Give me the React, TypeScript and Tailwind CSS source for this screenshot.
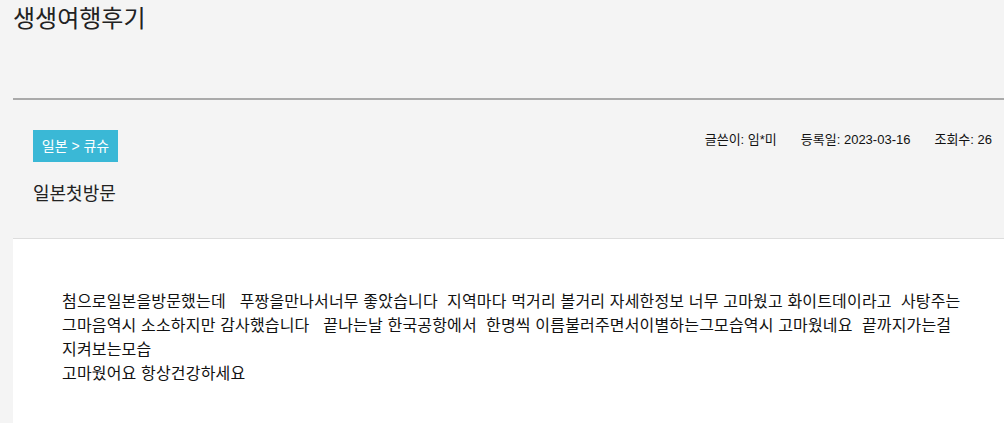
import React from "react";

const lines = [
  "첨으로일본을방문했는데   푸짱을만나서너무 좋았습니다  지역마다 먹거리 볼거리 자세한정보 너무 고마웠고 화이트데이라고  사탕주는",
  "그마음역시 소소하지만 감사했습니다   끝나는날 한국공항에서  한명씩 이름불러주면서이별하는그모습역시 고마웠네요  끝까지가는걸",
  "지켜보는모습",
  "고마웠어요 항상건강하세요",
];

export default function App() {
  return (
    <div
      className="min-h-screen bg-[#f4f4f4] text-[#222]"
      style={{ fontFamily: '"Liberation Sans", "Noto Sans CJK KR", sans-serif' }}
    >
      <div className="h-[98px] pl-[13px] pt-[3px]">
        <h1 className="text-[24px] leading-[32px] font-normal">생생여행후기</h1>
      </div>
      <div className="ml-[13px] h-[2px] bg-[#aaaaaa]" />
      <div className="ml-[13px] border-b border-[#dddddd] pl-[20px] pr-[12px] pt-[30px] pb-[32px]">
        <div className="flex items-start justify-between">
          <div className="flex h-[32px] w-[85px] items-center justify-center bg-[#3ab8d6] text-[14px] text-white">
            일본 &gt; 큐슈
          </div>
          <div className="mt-[1px] flex gap-[24px] text-[13px] leading-[18px] text-[#111]">
            <span>글쓴이: 임*미</span>
            <span>등록일: 2023-03-16</span>
            <span>조회수: 26</span>
          </div>
        </div>
        <div className="mt-[20px] text-[18px] leading-[24px]">일본첫방문</div>
      </div>
      <div className="ml-[13px] bg-white pl-[49px] pt-[51px] pb-[40px] text-[16px] leading-[24px] tracking-[0.17px] text-[#111]">
        {lines.map((l, i) => (
          <div key={i} className="whitespace-pre">
            {l}
          </div>
        ))}
      </div>
    </div>
  );
}
